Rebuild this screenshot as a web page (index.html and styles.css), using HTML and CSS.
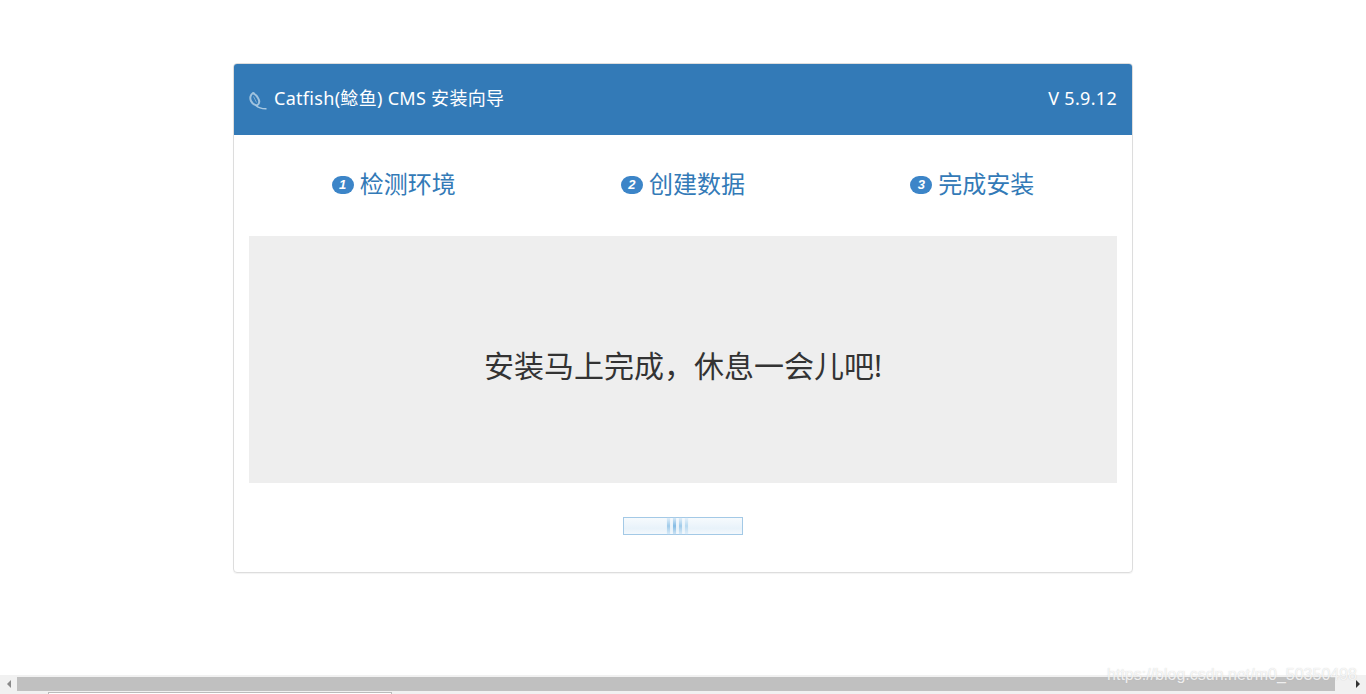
FILE: index.html
```html
<!DOCTYPE html>
<html lang="zh-CN">
<head>
    <meta charset="UTF-8">
    <meta name="viewport" content="width=device-width, initial-scale=1.0">
    <title>Catfish(鲶鱼) CMS 安装向导</title>
    <link rel="stylesheet" href="styles.css">
</head>
<body>
    <div class="page">
        <div class="panel">
            <div class="panel-heading">
                <div class="brand">
                    <svg class="leaf" width="18" height="18" viewBox="0 0 18 18" fill="none">
                        <path d="M4 1C1.500 2.500 .5 6 2 9C3.500 12 6.500 13.500 8.500 13C10.500 11.500 10.500 8.500 9 6C8 4 6 2 4 1Z" stroke="#9fc2de" stroke-width="2"/>
                        <path d="M6.500 13.200C9.500 15.800 13 17 17.500 16.800" stroke="#a9c9e2" stroke-width="1.500"/>
                        <path d="M4.500 4.500L7.500 10.500" stroke="#7fabd0" stroke-width="1"/>
                    </svg>
                    <span>Catfish(鲶鱼) CMS 安装向导</span>
                </div>
                <span>V 5.9.12</span>
            </div>
            <div class="panel-body">
                <div class="steps">
                    <div class="step"><span class="badge">1</span>检测环境</div>
                    <div class="step"><span class="badge">2</span>创建数据</div>
                    <div class="step"><span class="badge">3</span>完成安装</div>
                </div>
                <div class="well">安装马上完成，休息一会儿吧!</div>
                <div class="loading">
                    <div class="loader"><div class="loader-bars"><i></i><i></i><i></i><i></i></div></div>
                </div>
            </div>
        </div>
    </div>

    <div class="scrollbar">
        <span class="arrow arrow-left"></span>
        <div class="scroll-track"><div class="scroll-thumb"></div></div>
        <span class="arrow arrow-right"></span>
    </div>
    <div class="taskstrip"><div class="strip-tab"></div></div>
    <div class="watermark">https://blog.csdn.net/m0_50350498</div>
</body>
</html>
```

FILE: styles.css
```css
html, body {
    margin: 0;
    height: 694px;
    overflow: hidden;
}

body {
    position: relative;
    display: flex;
    flex-direction: column;
    background: #fff;
    font-family: "Noto Sans", "Noto Sans CJK SC", sans-serif;
    color: #333;
}

.page {
    flex: 1;
    padding-top: 63px;
}

.panel {
    width: 898px;
    margin: 0 auto;
    border: 1px solid #ddd;
    border-radius: 4px;
    box-shadow: 0 1px 1px rgba(0, 0, 0, 0.05);
}

.panel-heading {
    display: flex;
    justify-content: space-between;
    align-items: center;
    box-sizing: border-box;
    height: 71px;
    padding: 0 15px 4px;
    background: #337ab7;
    color: #fff;
    font-size: 18px;
    line-height: 24px;
    letter-spacing: 0.3px;
    border-radius: 3px 3px 0 0;
}

.brand {
    display: flex;
    align-items: center;
    gap: 7px;
}

.leaf {
    margin-top: 6px;
}

.panel-body {
    padding: 0 15px 37px;
}

.steps {
    display: grid;
    grid-template-columns: repeat(3, 1fr);
    box-sizing: border-box;
    height: 101px;
    padding-bottom: 4px;
    align-items: center;
}

.step {
    display: flex;
    justify-content: center;
    align-items: center;
    gap: 6px;
    font-size: 24px;
    line-height: 30px;
    color: #337ab7;
}

.badge {
    width: 22px;
    height: 18px;
    margin-top: 3px;
    border-radius: 9px;
    background: #3c85c8;
    color: #fff;
    font-family: "Liberation Sans", sans-serif;
    font-size: 13px;
    font-weight: bold;
    font-style: italic;
    line-height: 18px;
    text-align: center;
}

.well {
    height: 247px;
    display: flex;
    justify-content: center;
    align-items: center;
    padding-top: 13px;
    box-sizing: border-box;
    background: #eee;
    font-size: 30px;
    line-height: 40px;
}

.loading {
    display: flex;
    justify-content: center;
    padding-top: 34px;
}

.loader {
    display: flex;
    justify-content: center;
    align-items: center;
    box-sizing: border-box;
    width: 120px;
    height: 18px;
    padding-right: 12px;
    border: 1px solid #a3c9e6;
    background: linear-gradient(#f6fafd, #e8f2fa 65%, #f3f8fc);
}

.loader-bars {
    display: flex;
    gap: 3px;
}

.loader-bars i {
    width: 3px;
    height: 16px;
    background: linear-gradient(#e0eef9, #a0cbea 50%, #d8eaf7);
    box-shadow: 0 0 1px #d3e7f6;
}

.loader-bars i:nth-child(2) {
    background: linear-gradient(#d4e8f7, #84bbe4 50%, #cce3f4);
}

.loader-bars i:last-child {
    background: linear-gradient(#e6f2fb, #b8d9f0 50%, #e0eef9);
}

.scrollbar {
    display: flex;
    align-items: center;
    height: 15px;
    padding-top: 1px;
    background: #f1f1f1;
}

.arrow {
    flex: none;
    width: 17px;
    display: flex;
    justify-content: center;
}

.arrow::before {
    content: "";
    border-top: 4px solid transparent;
    border-bottom: 4px solid transparent;
}

.arrow-left::before {
    border-right: 4px solid #8a8a8a;
}

.arrow-right::before {
    border-left: 4px solid #333;
}

.scroll-track {
    flex: 1;
}

.scroll-thumb {
    width: 1318px;
    height: 14px;
    background: #c0c0c0;
}

.taskstrip {
    height: 3px;
    background: #f1f1f1;
}

.strip-tab {
    width: 342px;
    height: 2px;
    margin: 1px 0 0 48px;
    border: 1px solid #bbb;
    border-bottom: 0;
    background: #fff;
}

.watermark {
    position: absolute;
    right: 9px;
    top: 664px;
    color: rgba(255, 255, 255, 0.8);
    font-family: "Liberation Sans", sans-serif;
    font-size: 16px;
    line-height: 22px;
    text-shadow: 0 0 1px rgba(170, 170, 170, 0.6);
}
```
